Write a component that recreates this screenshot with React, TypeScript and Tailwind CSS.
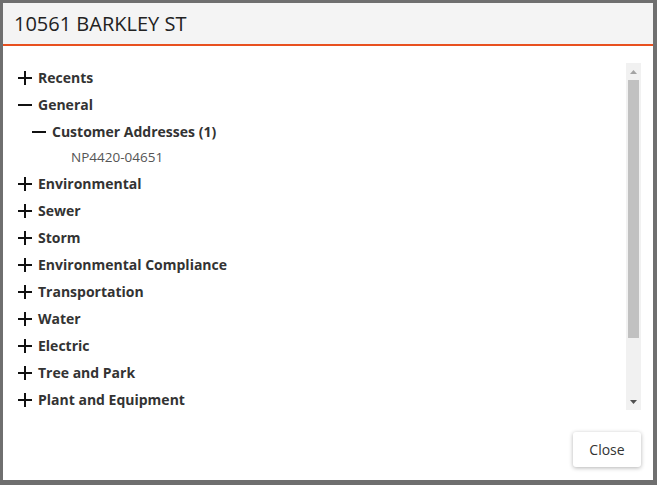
type Node = { label: string; open?: boolean; children?: Node[]; leaf?: boolean };

const tree: Node[] = [
  { label: 'Recents' },
  {
    label: 'General',
    open: true,
    children: [
      { label: 'Customer Addresses (1)', open: true, children: [{ label: 'NP4420-04651', leaf: true }] },
    ],
  },
  { label: 'Environmental' },
  { label: 'Sewer' },
  { label: 'Storm' },
  { label: 'Environmental Compliance' },
  { label: 'Transportation' },
  { label: 'Water' },
  { label: 'Electric' },
  { label: 'Tree and Park' },
  { label: 'Plant and Equipment' },
];

function Toggle({ open }: { open?: boolean }) {
  return (
    <svg width="14" height="14" viewBox="0 0 14 14" className="shrink-0">
      <rect x="0" y="6" width="14" height="2" fill="#111" />
      {!open && <rect x="6" y="0" width="2" height="14" fill="#111" />}
    </svg>
  );
}

function TreeRow({ node, depth }: { node: Node; depth: number }) {
  if (node.leaf) {
    return (
      <div className="flex h-[25px] items-center pl-[56px] text-[13.5px] text-[#555]">
        {node.label}
      </div>
    );
  }
  return (
    <div>
      <div
        className="flex h-[27px] items-center gap-[6px] text-[14px] font-bold text-[#333]"
        style={{ paddingLeft: 3 + depth * 14 }}
      >
        <Toggle open={node.open} />
        <span>{node.label}</span>
      </div>
      {node.open && node.children?.map((c) => <TreeRow key={c.label} node={c} depth={depth + 1} />)}
    </div>
  );
}

// drawn scrollbar, the headless browser hides the native one
function Scrollbar() {
  return (
    <div className="flex w-[15px] shrink-0 flex-col bg-[#f1f1f1]">
      <div className="flex h-[17px] items-center justify-center">
        <svg width="7" height="4" viewBox="0 0 7 4">
          <path d="M3.5 0 L7 4 L0 4 Z" fill="#a3a3a3" />
        </svg>
      </div>
      <div className="mx-[2px] h-[258px] bg-[#c1c1c1]" />
      <div className="flex-1" />
      <div className="flex h-[17px] items-center justify-center">
        <svg width="7" height="4" viewBox="0 0 7 4">
          <path d="M0 0 L7 0 L3.5 4 Z" fill="#505050" />
        </svg>
      </div>
    </div>
  );
}

export default function App() {
  return (
    <div
      className="h-[485px] w-[657px] bg-[#6f6f6f] pt-[3px] pr-[4px] pb-[5px] pl-[3px]"
      style={{ fontFamily: '"Open Sans", sans-serif' }}
    >
      <div className="flex h-full flex-col bg-white">
        <div className="flex h-[43px] shrink-0 items-center border-b-2 border-[#e8501f] bg-[#f4f4f4] px-[11px] pt-[1px] text-[20px] text-[#222]">
          10561 BARKLEY ST
        </div>
        <div className="flex flex-1 flex-col px-[12px] pt-[17px] pb-[13px]">
          <div className="flex h-[347px]">
            <div className="flex-1 overflow-hidden pt-[1px]">
              {tree.map((n) => (
                <TreeRow key={n.label} node={n} depth={0} />
              ))}
            </div>
            <Scrollbar />
          </div>
          <div className="mt-auto flex justify-end">
            <button className="h-[35px] w-[68px] rounded-[3px] bg-white text-[14px] text-[#333] shadow-[0_1px_4px_rgba(0,0,0,0.3)]">
              Close
            </button>
          </div>
        </div>
      </div>
    </div>
  );
}
